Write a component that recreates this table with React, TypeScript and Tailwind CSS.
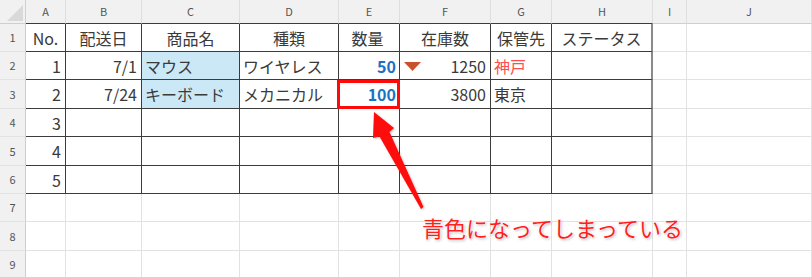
import React from "react";

type Cell = {
  t?: string;
  align?: "l" | "r" | "c";
  cls?: string;
  bg?: string;
  tri?: boolean;
  box?: boolean;
};

const cols = ["A", "B", "C", "D", "E", "F", "G", "H", "I", "J"];

const C = (t: string, align: "l" | "r" | "c" = "l", cls = ""): Cell => ({ t, align, cls });

const data: Cell[][] = [
  [C("No.", "c"), C("配送日", "c"), C("商品名", "c"), C("種類", "c"), C("数量", "c"), C("在庫数", "c"), C("保管先", "c"), C("ステータス", "c")],
  [
    C("1", "r"),
    C("7/1", "r"),
    { t: "マウス", align: "l", bg: "bg-[#cbe8f7]" },
    C("ワイヤレス"),
    C("50", "r", "font-bold text-[#1b72c4]"),
    { t: "1250", align: "r", tri: true },
    C("神戸", "l", "text-[#ff4d4d]"),
    C(""),
  ],
  [
    C("2", "r"),
    C("7/24", "r"),
    { t: "キーボード", align: "l", bg: "bg-[#cbe8f7]" },
    C("メカニカル"),
    { t: "100", align: "r", cls: "font-bold text-[#1b72c4]", box: true },
    C("3800", "r"),
    C("東京"),
    C(""),
  ],
  [C("3", "r"), C(""), C(""), C(""), C(""), C(""), C(""), C("")],
  [C("4", "r"), C(""), C(""), C(""), C(""), C(""), C(""), C("")],
  [C("5", "r"), C(""), C(""), C(""), C(""), C(""), C(""), C("")],
];

const font = "[font-family:'Noto_Sans_CJK_JP','Noto_Sans',sans-serif]";

export default function App() {
  const rows: React.ReactNode[] = [];
  rows.push(
    <div
      key="corner"
      className="relative bg-[#f1f1f1] border-r border-b border-[#cfcfcf]"
    >
      <svg className="absolute left-0 top-0" width="26" height="24">
        <polygon points="23,5 23,21 7,21" fill="#d9d9d9" />
      </svg>
    </div>
  );
  cols.forEach((c, i) => {
    const inTable = i < 8;
    rows.push(
      <div
        key={"h" + c}
        className={`flex items-center justify-center bg-[#f1f1f1] text-[11px] text-[#555] leading-none border-r border-r-[#dedede] border-b ${
          inTable ? "border-b-[#3c3c3c]" : "border-b-[#cfcfcf]"
        } ${font}`}
      >
        {c}
      </div>
    );
  });

  for (let r = 1; r <= 9; r++) {
    rows.push(
      <div
        key={"rh" + r}
        className={`flex items-center justify-center bg-[#f1f1f1] text-[11px] text-[#555] leading-none border-r border-r-[#cdcdcd] border-b border-b-[#e2e2e2] ${font}`}
      >
        {r}
      </div>
    );
    cols.forEach((c, i) => {
      const inTable = r <= 6 && i < 8;
      const cell = inTable ? data[r - 1][i] : undefined;
      const justify =
        cell?.align === "r" ? "justify-end pr-1" : cell?.align === "c" ? "justify-center" : "justify-start pl-[3px]";
      const borderR = inTable
        ? i === 7
          ? "border-r-2 border-r-[#8a8a8a]"
          : "border-r border-r-[#3c3c3c]"
        : "border-r border-r-[#e2e2e2]";
      const borderB = inTable ? "border-b border-b-[#3c3c3c]" : "border-b border-b-[#e2e2e2]";
      rows.push(
        <div
          key={c + r}
          className={`relative flex items-center overflow-visible whitespace-nowrap text-[16px] leading-none text-[#3a3a3a] ${font} ${justify} ${borderR} ${borderB} ${
            cell?.bg ?? "bg-white"
          } ${i === 4 && inTable ? "pr-[3px]" : ""}`}
        >
          {cell?.tri && (
            <svg className="absolute left-[4px] top-[10px]" width="17" height="10">
              <polygon points="0,0 17,0 8.5,9" fill="#c9502b" />
            </svg>
          )}
          <span className={cell?.cls ?? ""}>{cell?.t}</span>
          {cell?.box && (
            <div className="absolute left-[-2px] right-[-1px] top-0 bottom-[-1px] border-[3px] border-[#ff0a0a] z-10" />
          )}
        </div>
      );
    });
  }

  return (
    <div className="relative w-[812px] h-[277px] overflow-hidden bg-white">
      <div className="grid grid-cols-[26px_40px_76px_98px_99px_61px_91px_61px_101px_34px_1fr] grid-rows-[24px_28px_28px_29px_28px_29px_28px_28px_29px_28px]">
        {rows}
      </div>
      <svg className="absolute left-0 top-0 z-20 pointer-events-none" width="812" height="277">
        <defs>
          <filter id="sh" x="-20%" y="-20%" width="140%" height="140%">
            <feDropShadow dx="1" dy="1" stdDeviation="1" floodColor="#000" floodOpacity="0.25" />
          </filter>
        </defs>
        <polygon
          points="374,112 394,128 389.5,132 423.5,207 421,209 379.5,136.5 373,138"
          fill="#ff0a0a"
          filter="url(#sh)"
        />
      </svg>
      <div
        className={`absolute left-[422px] top-[211px] z-20 text-[22px] leading-[32px] text-[#ff1f1f] whitespace-nowrap ${font} [text-shadow:0_0_2px_#fff,0_0_2px_#fff,1px_1px_3px_rgba(0,0,0,0.35)]`}
      >
        青色になってしまっている
      </div>
    </div>
  );
}
